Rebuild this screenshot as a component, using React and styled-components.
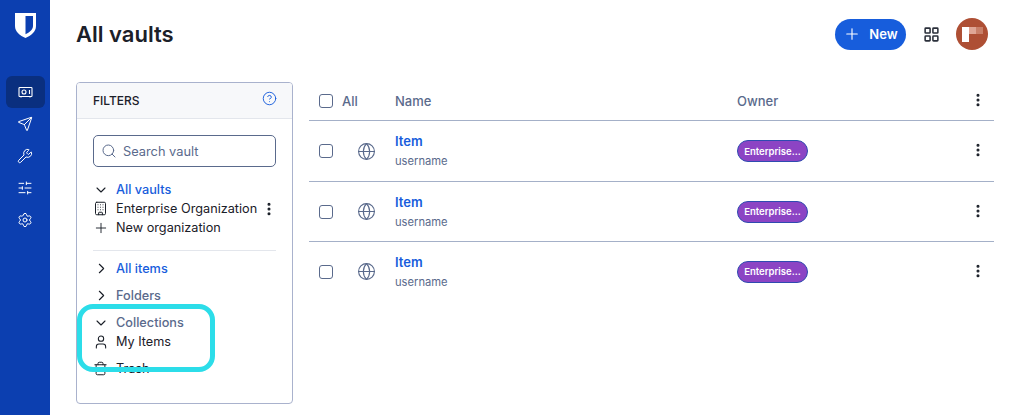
import React from "react";
import styled, { createGlobalStyle } from "styled-components";
import {
  ChevronDown,
  ChevronRight,
  CircleHelp,
  Globe,
  Plus,
  Search,
  Send,
  Wrench,
  SlidersHorizontal,
  Settings,
  Building,
  User,
  Trash2,
  EllipsisVertical,
  LayoutGrid,
} from "lucide-react";

const GlobalStyle = createGlobalStyle`
  html, body { margin: 0; padding: 0; background: #fff; }
  body { font-family: Inter, "Liberation Sans", sans-serif; color: #1b2029; }
  * { box-sizing: border-box; }
`;

const Page = styled.div`
  display: flex;
  width: 1016px;
  height: 415px;
  overflow: hidden;
  position: relative;
`;

const Sidebar = styled.nav`
  width: 50px;
  flex: none;
  background: #0c3fb0;
  display: flex;
  flex-direction: column;
  align-items: center;
  padding-top: 13px;
`;

const Logo = styled.svg`
  width: 21px;
  height: 25px;
  margin-bottom: 38px;
`;

const NavItem = styled.div`
  width: 39px;
  height: 32px;
  border-radius: 6px;
  display: flex;
  align-items: center;
  justify-content: center;
  color: #fff;
  background: ${(p) => (p.$active ? "#0a2f7f" : "transparent")};
`;

const Main = styled.main`
  flex: 1;
  padding: 18px 22px 0 26px;
  min-width: 0;
`;

const TopBar = styled.header`
  display: flex;
  align-items: center;
  justify-content: space-between;
  height: 32px;
  margin-bottom: 32px;
`;

const Title = styled.h1`
  margin: 0;
  font-size: 22px;
  font-weight: 600;
  color: #1b2029;
`;

const TopActions = styled.div`
  display: flex;
  align-items: center;
  margin-right: 6px;
`;

const NewButton = styled.button`
  width: 71px;
  height: 31px;
  border: none;
  border-radius: 16px;
  background: #175ddc;
  color: #fff;
  font: 600 13px Inter, sans-serif;
  display: flex;
  align-items: center;
  justify-content: center;
  gap: 8px;
  padding: 0;
  margin-right: 17px;
`;

const AppsIcon = styled.div`
  display: flex;
  color: #2b303b;
  margin-right: 16px;
`;

const Avatar = styled.div`
  width: 32px;
  height: 32px;
  border-radius: 50%;
  background: #ae4f34;
  overflow: hidden;
  position: relative;
`;

const AvatarMark = styled.svg`
  width: 32px;
  height: 32px;
  display: block;
`;

const Content = styled.div`
  display: flex;
  gap: 16px;
  align-items: flex-start;
`;

const Panel = styled.aside`
  width: 217px;
  height: 322px;
  flex: none;
  border: 1px solid #a9b2cd;
  border-radius: 4px;
  overflow: hidden;
`;

const PanelHeader = styled.div`
  height: 36px;
  background: #f7f8fa;
  border-bottom: 1px solid #e3e6ec;
  display: flex;
  align-items: center;
  justify-content: space-between;
  padding: 0 15px 0 16px;
  font-size: 12px;
  font-weight: 500;
  color: #1b2029;
  svg { color: #175ddc; margin-top: -4px; }
`;

const PanelBody = styled.div`
  padding: 16px 16px 0 16px;
`;

const SearchBox = styled.div`
  height: 32px;
  border: 1px solid #5a6a8c;
  border-radius: 5px;
  display: flex;
  align-items: center;
  gap: 6px;
  padding: 0 7px;
  color: #5a6a8c;
  font-size: 12.8px;
  margin-bottom: 13px;
`;

const Row = styled.div`
  height: 19px;
  display: flex;
  align-items: center;
  font-size: 12.7px;
  color: ${(p) => (p.$tone === "link" ? "#175ddc" : p.$tone === "muted" ? "#5a6a8c" : "#1b2029")};
  font-weight: ${(p) => (p.$tone === "link" || p.$tone === "muted" ? 500 : 400)};
  margin-top: ${(p) => p.$gap || 0}px;
`;

const RowIcon = styled.span`
  width: 23px;
  flex: none;
  display: flex;
  color: #1b2029;
`;

const RowMenu = styled.span`
  margin-left: auto;
  display: flex;
  margin-right: -1px;
`;

const Divider = styled.hr`
  border: none;
  border-top: 1px solid #e3e6ec;
  margin: 13px 0 8px;
`;

const Table = styled.section`
  flex: 1;
  min-width: 0;
`;

const HeaderRow = styled.div`
  height: 39px;
  display: flex;
  align-items: center;
  border-bottom: 1px solid #a4b0c8;
  font-size: 13px;
  font-weight: 500;
  color: #5a6a8c;
`;

const ItemRow = styled.div`
  height: ${(p) => (p.$first ? 61 : 60)}px;
  display: flex;
  align-items: center;
  border-bottom: 1px solid ${(p) => (p.$last ? "transparent" : "#a4b0c8")};
`;

const Check = styled.span`
  width: 14px;
  height: 14px;
  border: 1px solid #5a6a8c;
  border-radius: 3px;
  margin-left: 10px;
  flex: none;
`;

const AllCell = styled.span`
  width: 62px;
  padding-left: 9px;
  flex: none;
`;

const IconCell = styled.span`
  width: 62px;
  padding-left: 24px;
  flex: none;
  display: flex;
  color: #5a6a8c;
`;

const NameCell = styled.div`
  width: 342px;
  flex: none;
`;

const ItemText = styled(NameCell)`
  padding-top: 1px;
`;

const ItemName = styled.div`
  font-size: 13px;
  font-weight: 600;
  color: #175ddc;
  line-height: 16px;
  margin-top: -2px;
`;

const ItemUser = styled.div`
  font-size: 11.2px;
  color: #5a6a8c;
  line-height: 14px;
  margin-top: 5px;
`;

const OwnerCell = styled.div`
  flex: 1;
  display: flex;
`;

const Badge = styled.span`
  width: 71px;
  height: 22px;
  border-radius: 11px;
  background: #8c44c4;
  border: 1px solid #2f4bb0;
  color: #fff;
  font-size: 9.5px;
  font-weight: 600;
  display: flex;
  align-items: center;
  justify-content: center;
`;

const MenuCell = styled.span`
  width: 32px;
  flex: none;
  display: flex;
  padding-left: 8px;
  margin-top: -2px;
  color: #1b2029;
`;

const Highlight = styled.div`
  position: absolute;
  left: 77px;
  top: 304px;
  width: 138px;
  height: 68px;
  border: 5px solid #2cdde9;
  border-radius: 16px;
  pointer-events: none;
`;

const navIcons = [Send, Wrench, SlidersHorizontal, Settings];
const items = [1, 2, 3];

const VaultIcon = () => (
  <svg width="15" height="15" viewBox="0 0 15 15" fill="none" stroke="currentColor" strokeWidth="1.1">
    <rect x="1" y="2.5" width="13" height="9" rx="0.8" />
    <circle cx="6" cy="7" r="2" />
    <path d="M11.5 5v4M3 11.5v1M12 11.5v1" />
  </svg>
);

const App = () => {
  return (
    <Page>
      <GlobalStyle />
      <Sidebar>
        <Logo viewBox="0 0 21 25">
          <path
            fillRule="evenodd"
            fill="#fff"
            d="M0 0h21v13c0 6-5 9.500-10.500 12C5 22.500 0 19 0 13V0zM10.500 3v18.300c4-2 7.500-4.500 7.500-8.300V3h-7.500z"
          />
        </Logo>
        <NavItem $active>
          <VaultIcon />
        </NavItem>
        {navIcons.map((Icon, i) => (
          <NavItem key={i}>
            <Icon size={16} strokeWidth={1.5} />
          </NavItem>
        ))}
      </Sidebar>
      <Main>
        <TopBar>
          <Title>All vaults</Title>
          <TopActions>
            <NewButton>
              <Plus size={18} strokeWidth={1.5} />
              New
            </NewButton>
            <AppsIcon>
              <LayoutGrid size={17} strokeWidth={2.2} />
            </AppsIcon>
            <Avatar>
              <AvatarMark viewBox="0 0 32 32">
                <rect x="6" y="9" width="7" height="15" fill="#fff" />
                <rect x="13" y="9" width="7" height="7" fill="#dfa695" />
                <rect x="20" y="9" width="7" height="7" fill="#c97f68" />
              </AvatarMark>
            </Avatar>
          </TopActions>
        </TopBar>
        <Content>
          <Panel>
            <PanelHeader>
              FILTERS
              <CircleHelp size={15} strokeWidth={1.5} />
            </PanelHeader>
            <PanelBody>
              <SearchBox>
                <Search size={16} strokeWidth={1.5} />
                Search vault
              </SearchBox>
              <Row $tone="link">
                <RowIcon><ChevronDown size={16} strokeWidth={1.6} /></RowIcon>
                All vaults
              </Row>
              <Row>
                <RowIcon><Building size={15} strokeWidth={1.6} /></RowIcon>
                Enterprise Organization
                <RowMenu><EllipsisVertical size={16} strokeWidth={2.6} /></RowMenu>
              </Row>
              <Row>
                <RowIcon><Plus size={16} strokeWidth={1.4} /></RowIcon>
                New organization
              </Row>
              <Divider />
              <Row $tone="link">
                <RowIcon><ChevronRight size={17} strokeWidth={1.6} /></RowIcon>
                All items
              </Row>
              <Row $tone="muted" $gap={8}>
                <RowIcon><ChevronRight size={17} strokeWidth={1.6} /></RowIcon>
                Folders
              </Row>
              <Row $tone="muted" $gap={8}>
                <RowIcon><ChevronDown size={16} strokeWidth={1.6} /></RowIcon>
                Collections
              </Row>
              <Row>
                <RowIcon><User size={16} strokeWidth={1.6} /></RowIcon>
                My Items
              </Row>
              <Row $gap={8}>
                <RowIcon><Trash2 size={15} strokeWidth={1.6} /></RowIcon>
                Trash
              </Row>
            </PanelBody>
          </Panel>
          <Table>
            <HeaderRow>
              <Check />
              <AllCell>All</AllCell>
              <NameCell>Name</NameCell>
              <OwnerCell>Owner</OwnerCell>
              <MenuCell><EllipsisVertical size={16} strokeWidth={2.6} /></MenuCell>
            </HeaderRow>
            {items.map((n) => (
              <ItemRow key={n} $first={n === 1} $last={n === items.length}>
                <Check />
                <IconCell><Globe size={19} strokeWidth={1.4} /></IconCell>
                <ItemText>
                  <ItemName>Item</ItemName>
                  <ItemUser>username</ItemUser>
                </ItemText>
                <OwnerCell><Badge>Enterprise...</Badge></OwnerCell>
                <MenuCell><EllipsisVertical size={16} strokeWidth={2.6} /></MenuCell>
              </ItemRow>
            ))}
          </Table>
        </Content>
      </Main>
      <Highlight />
    </Page>
  );
};

export default App;
